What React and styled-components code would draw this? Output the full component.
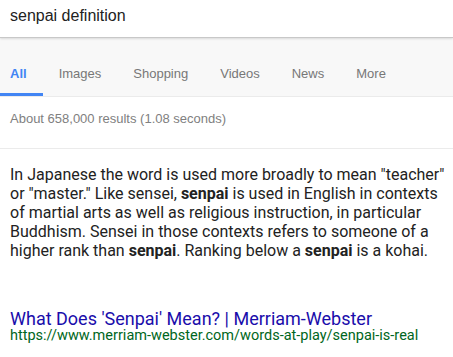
import React from "react";
import styled, { createGlobalStyle } from "styled-components";

const Global = createGlobalStyle`
  html, body { margin: 0; padding: 0; background: #fff; }
  body { font-family: "Liberation Sans", Arial, sans-serif; width: 453px; height: 357px; overflow: hidden; }
`;

const SearchBar = styled.header`
  box-sizing: border-box;
  height: 38px;
  display: flex;
  align-items: flex-start;
  padding: 6px 10px 0;
  background: #fff;
  border-bottom: 1px solid #c8c8c8;
  box-shadow: 0 1px 2px rgba(0,0,0,0.12);
  position: relative;
  z-index: 1;
`;

const Query = styled.div`
  font-family: "Liberation Sans", Arial, sans-serif;
  font-size: 16px;
  color: #222;
  line-height: 20px;
`;

const TabBar = styled.nav`
  display: flex;
  background: #f8f8f8;
  border-bottom: 1px solid #ebebeb;
`;

const Tab = styled.div`
  padding: 28px 16px 11px;
  padding-left: ${p => (p.$first ? "10px" : "16px")};
  font-family: "Liberation Sans", Arial, sans-serif;
  font-size: 13px;
  line-height: 16px;
  font-weight: ${p => (p.$active ? 700 : 400)};
  color: ${p => (p.$active ? "#4285f4" : "#777")};
  border-bottom: 3px solid ${p => (p.$active ? "#4285f4" : "transparent")};
`;

const Stats = styled.div`
  padding: 14px 10px 0;
  height: 37px;
  font-family: "Liberation Sans", Arial, sans-serif;
  font-size: 13px;
  line-height: 16px;
  color: #808080;
  border-bottom: 1px solid #ebebeb;
`;

const Snippet = styled.p`
  margin: 0;
  padding: 16px 0 0 10px;
  font-family: Roboto, "Liberation Sans", Arial, sans-serif;
  font-size: 16px;
  line-height: 19px;
  color: #222;
  b { font-weight: 700; }
`;

const Result = styled.div`
  padding: 49px 10px 0;
  display: flex;
  flex-direction: column;
`;

const Title = styled.a`
  font-family: Roboto, "Liberation Sans", Arial, sans-serif;
  font-size: 18px;
  line-height: 19px;
  color: #1a0dab;
  text-decoration: none;
`;

const Url = styled.span`
  font-family: Roboto, "Liberation Sans", Arial, sans-serif;
  font-size: 14.5px;
  line-height: 16px;
  color: #006621;
`;

const tabs = ["All", "Images", "Shopping", "Videos", "News", "More"];

export default function App() {
  return (
    <>
      <Global />
      <SearchBar>
        <Query>senpai definition</Query>
      </SearchBar>
      <TabBar>
        {tabs.map((t, i) => (
          <Tab key={t} $first={i === 0} $active={i === 0}>{t}</Tab>
        ))}
      </TabBar>
      <Stats>About 658,000 results (1.08 seconds)</Stats>
      <Snippet>
        In Japanese the word is used more broadly to mean "teacher" or "master." Like sensei, <b>senpai</b> is used in English in contexts of martial arts as well as religious instruction, in particular Buddhism. Sensei in those contexts refers to someone of a higher rank than <b>senpai</b>. Ranking below a <b>senpai</b> is a kohai.
      </Snippet>
      <Result>
        <Title href="#">What Does 'Senpai' Mean? | Merriam-Webster</Title>
        <Url>https://www.merriam-webster.com/words-at-play/senpai-is-real</Url>
      </Result>
    </>
  );
}
